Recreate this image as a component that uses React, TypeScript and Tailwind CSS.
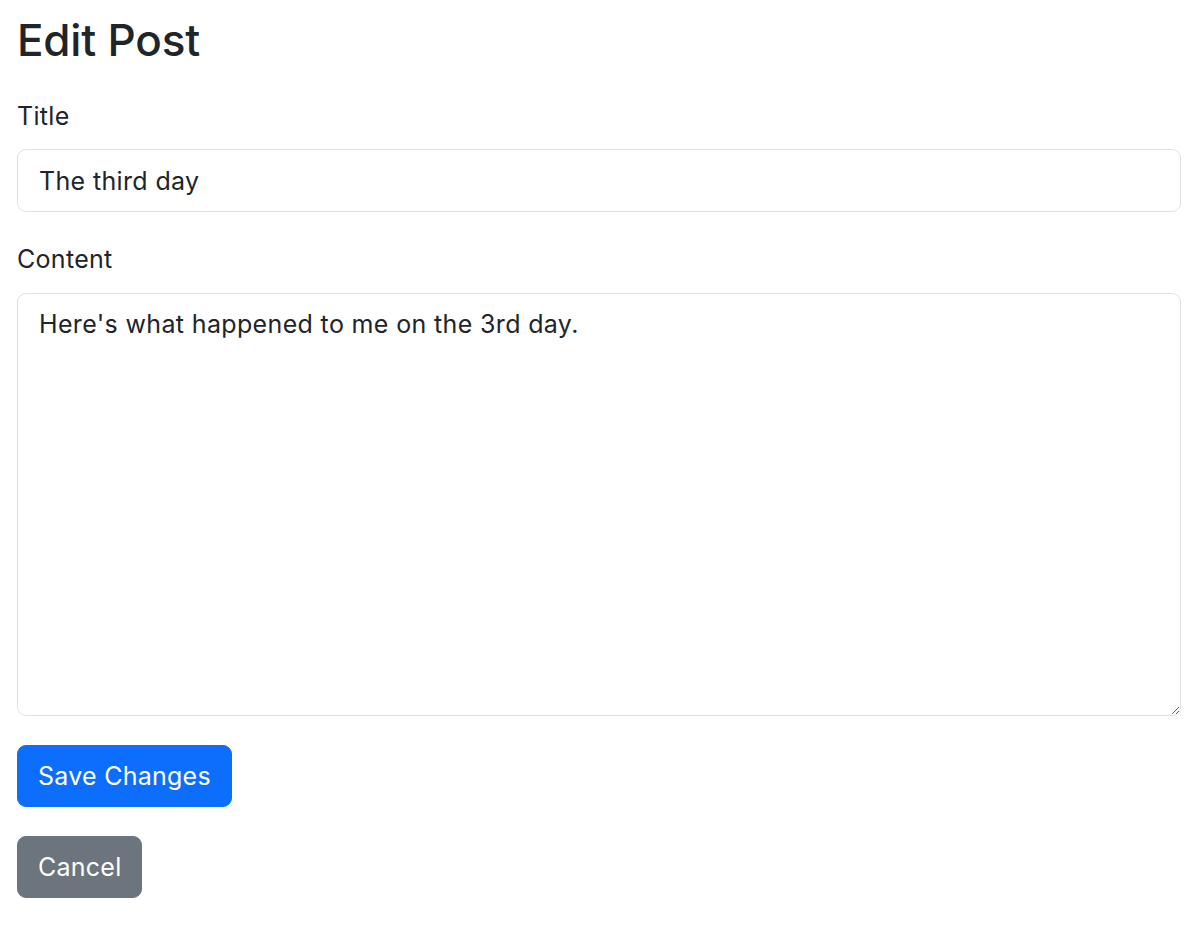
import React from "react";

export default function App() {
  return (
    <div
      className="min-h-screen bg-white pl-[17px] pr-[19px] pt-[14px] text-[#212529]"
      style={{ fontFamily: "Inter, 'Liberation Sans', sans-serif" }}
    >
      <h1 className="text-[44px] leading-[53px] font-medium tracking-[-0.2px]">Edit Post</h1>
      <form className="flex flex-col" onSubmit={(e) => e.preventDefault()}>
        <label className="mt-[31px] text-[25px] leading-[36px] tracking-[0.3px]">Title</label>
        <input
          type="text"
          defaultValue="The third day"
          className="mt-[15px] h-[63px] w-full rounded-[9px] border border-[#dee2e6] bg-white px-[21px] py-[13px] text-[25px] leading-[36px] tracking-[0.35px] text-[#212529] outline-none"
        />
        <label className="mt-[29px] text-[25px] leading-[36px] tracking-[0.3px]">Content</label>
        <textarea
          defaultValue="Here's what happened to me on the 3rd day."
          className="mt-[16px] h-[423px] w-full resize-y rounded-[9px] border border-[#dee2e6] bg-white px-[21px] py-[12px] text-[25px] leading-[36px] tracking-[0.35px] text-[#212529] outline-none"
        />
        <div className="mt-[29px]">
          <button
            type="submit"
            className="flex h-[62px] items-center rounded-[9px] border border-[#0d6efd] bg-[#0d6efd] px-[20px] text-[25px] leading-[36px] tracking-[0.25px] text-white"
          >
            Save Changes
          </button>
        </div>
        <div className="mt-[29px]">
          <button
            type="button"
            className="flex h-[62px] items-center rounded-[9px] border border-[#6c757d] bg-[#6c757d] px-[20px] text-[25px] leading-[36px] tracking-[0.25px] text-white"
          >
            Cancel
          </button>
        </div>
      </form>
    </div>
  );
}
